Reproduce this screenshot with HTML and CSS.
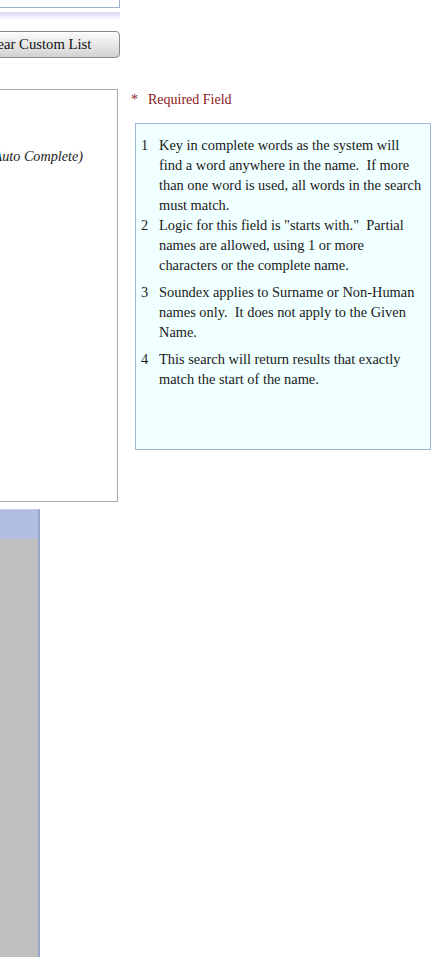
FILE: index.html
```html
<!DOCTYPE html>
<html>
<head>
<meta charset="utf-8">
<link rel="stylesheet" href="styles.css">
</head>
<body>
<div class="page">
  <div class="top-row">
    <div class="search-box"></div>
    <div class="tab-line"></div>
    <div class="btn-row"><button class="btn">Clear Custom List</button></div>
  </div>
  <div class="main">
    <div class="form-panel">
      <div class="hint">(Auto Complete)</div>
    </div>
    <div class="side">
      <div class="required"><span class="star">*</span>Required Field</div>
      <div class="info">
        <ol class="notes">
          <li><span class="num">1</span><span class="txt">Key in complete words as the system will find a word anywhere in the name.&nbsp; If more than one word is used, all words in the search must match.</span></li>
          <li><span class="num">2</span><span class="txt">Logic for this field is "starts with."&nbsp; Partial names are allowed, using 1 or more characters or the complete name.</span></li>
          <li class="spaced"><span class="num">3</span><span class="txt">Soundex applies to Surname or Non-Human names only.&nbsp; It does not apply to the Given Name.</span></li>
          <li class="spaced"><span class="num">4</span><span class="txt">This search will return results that exactly match the start of the name.</span></li>
        </ol>
      </div>
    </div>
  </div>
  <div class="results">
    <div class="results-head"></div>
    <div class="results-body"></div>
  </div>
</div>
</body>
</html>
```
FILE: styles.css
```css
html, body {
  margin: 0;
  padding: 0;
  background: #ffffff;
  overflow: hidden;
}
body {
  font-family: "Liberation Serif", "Times New Roman", serif;
  font-size: 14px;
  color: #1a1a1a;
  height: 957px;
}
.page {
  margin-left: -200px;
  width: 641px;
}
.top-row {
  width: 320px;
}
.search-box {
  height: 28px;
  margin-top: -20px;
  border: 1px solid #9fb0cc;
  background: #ffffff;
  box-sizing: border-box;
  width: 320px;
}
.tab-line {
  height: 8px;
  margin-top: 4px;
  background: linear-gradient(to bottom, #d6d6f6, #ffffff);
}
.btn-row {
  display: flex;
  justify-content: flex-end;
  margin-top: 11px;
}
.btn {
  width: 165px;
  height: 27px;
  border: 1px solid #8a8a8a;
  border-radius: 4px;
  background: linear-gradient(to bottom, #fbfbfb, #e6e6e6 55%, #d2d2d2);
  font-family: "Liberation Serif", "Times New Roman", serif;
  font-size: 14.7px;
  color: #111;
  padding: 0;
  box-shadow: inset 0 1px 0 #ffffff;
}
.main {
  display: flex;
  margin-top: 31px;
  align-items: flex-start;
}
.form-panel {
  width: 318px;
  height: 413px;
  box-sizing: border-box;
  border: 1px solid #a9a9a9;
  display: flex;
  flex-direction: column;
  align-items: flex-end;
  padding-top: 57px;
  padding-right: 34px;
}
.hint {
  font-style: italic;
  font-size: 14.2px;
  line-height: 18px;
}
.side {
  margin-left: 13px;
  width: 310px;
}
.required {
  color: #8b2020;
  line-height: 20px;
  margin-top: 1px;
}
.star {
  display: inline-block;
  width: 17px;
}
.info {
  margin-top: 13px;
  margin-left: 4px;
  width: 296px;
  height: 327px;
  box-sizing: border-box;
  border: 1px solid #a3b6d6;
  background: #f0ffff;
  padding: 11px 6px 0 5px;
  font-size: 14.4px;
}
.notes {
  list-style: none;
  margin: 0;
  padding: 0;
}
.notes li {
  display: flex;
  line-height: 20px;
}
.notes li.spaced {
  margin-top: 7px;
}
.num {
  flex: 0 0 18px;
}
.txt {
  flex: 1;
}
.results {
  margin-top: 7px;
  width: 240px;
  height: 460px;
  box-sizing: border-box;
  border-top: 1px solid #c8cfe6;
  border-right: 2px solid #96a6c8;
  background: #c0c0c0;
}
.results-head {
  height: 29px;
  background: #b2bde2;
}
```
